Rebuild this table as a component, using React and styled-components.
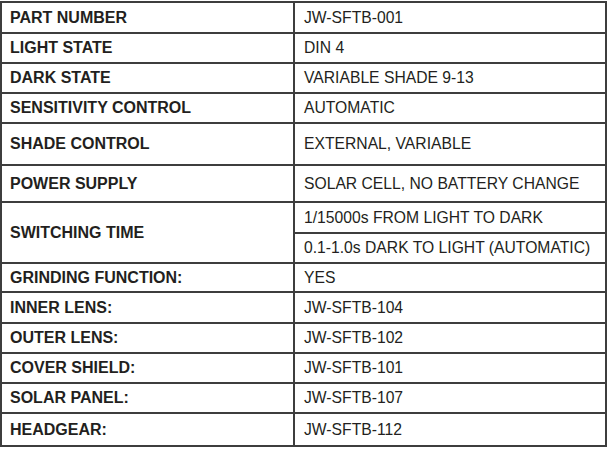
import React from "react";
import styled, { createGlobalStyle } from "styled-components";

const GlobalStyle = createGlobalStyle`
  html, body {
    margin: 0;
    padding: 0;
    background: #fff;
  }
  body {
    font-family: "Liberation Sans", Arial, sans-serif;
    color: #231f20;
  }
`;

const Sheet = styled.div`
  padding-top: 1px;
`;

const Grid = styled.div`
  display: grid;
  grid-template-columns: 293px 312px;
  grid-template-rows: ${({ rows }) => rows.map((h) => `${h}px`).join(" ")};
  width: 605px;
  border-top: 2px solid #3d3d3d;
  border-left: 2px solid #3d3d3d;
`;

const Cell = styled.div`
  box-sizing: border-box;
  display: flex;
  align-items: center;
  border-right: 2px solid #3d3d3d;
  border-bottom: 2px solid #3d3d3d;
  white-space: nowrap;
  grid-row: ${({ span }) => (span ? `span ${span}` : "auto")};
`;

const Label = styled(Cell)`
  padding-left: 8px;
  font-weight: bold;
  font-size: 16px;
`;

const Value = styled(Cell)`
  padding-left: 9px;
  font-size: 15.7px;
`;

const specs = [
  { label: "PART NUMBER", values: ["JW-SFTB-001"], h: [31] },
  { label: "LIGHT STATE", values: ["DIN 4"], h: [30] },
  { label: "DARK STATE", values: ["VARIABLE SHADE 9-13"], h: [30] },
  { label: "SENSITIVITY CONTROL", values: ["AUTOMATIC"], h: [30] },
  { label: "SHADE CONTROL", values: ["EXTERNAL, VARIABLE"], h: [42] },
  { label: "POWER SUPPLY", values: ["SOLAR CELL, NO BATTERY CHANGE"], h: [37] },
  {
    label: "SWITCHING TIME",
    values: ["1/15000s FROM LIGHT TO DARK", "0.1-1.0s DARK TO LIGHT (AUTOMATIC)"],
    h: [31, 30],
  },
  { label: "GRINDING FUNCTION:", values: ["YES"], h: [29] },
  { label: "INNER LENS:", values: ["JW-SFTB-104"], h: [31] },
  { label: "OUTER LENS:", values: ["JW-SFTB-102"], h: [30] },
  { label: "COVER SHIELD:", values: ["JW-SFTB-101"], h: [30] },
  { label: "SOLAR PANEL:", values: ["JW-SFTB-107"], h: [30] },
  { label: "HEADGEAR:", values: ["JW-SFTB-112"], h: [33] },
];

export default function App() {
  const rows = specs.flatMap((s) => s.h);
  return (
    <>
      <GlobalStyle />
      <Sheet>
        <Grid rows={rows}>
          {specs.map((s) => (
            <React.Fragment key={s.label}>
              <Label span={s.values.length > 1 ? s.values.length : 0}>{s.label}</Label>
              {s.values.map((v) => (
                <Value key={v}>{v}</Value>
              ))}
            </React.Fragment>
          ))}
        </Grid>
      </Sheet>
    </>
  );
}
